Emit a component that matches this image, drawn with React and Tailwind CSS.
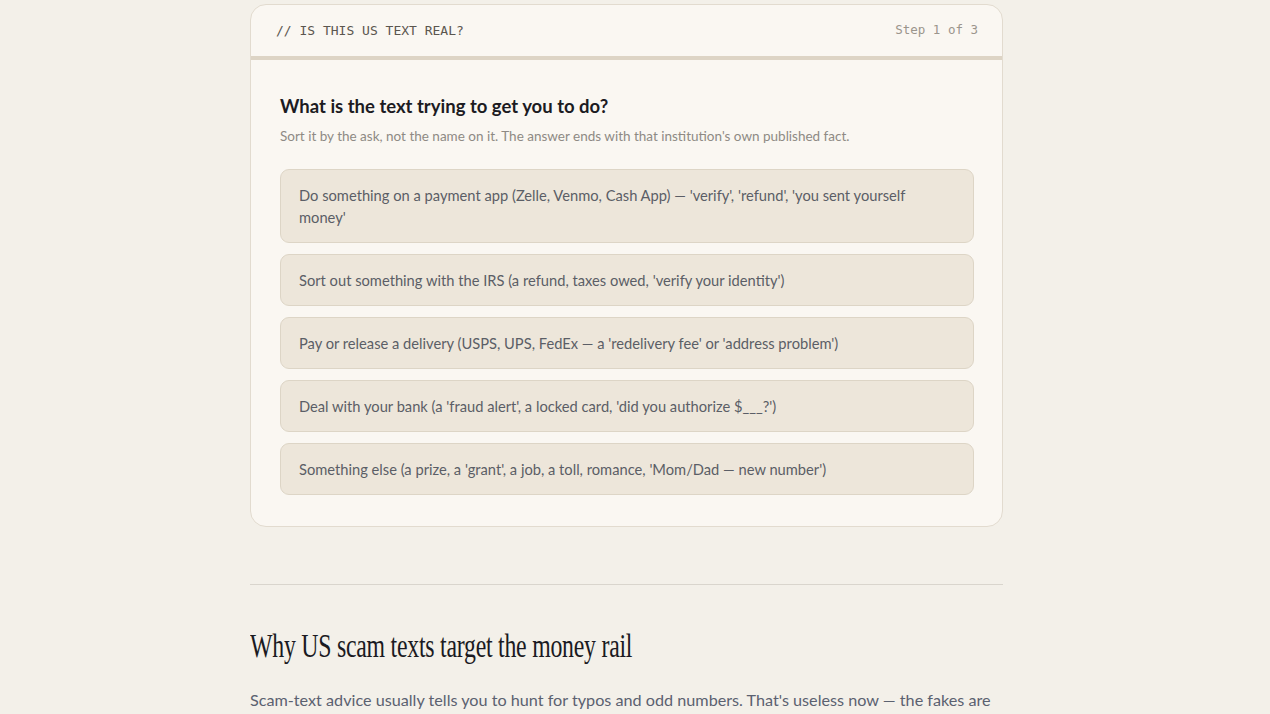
import React from "react";

const options = [
  "Do something on a payment app (Zelle, Venmo, Cash App) — 'verify', 'refund', 'you sent yourself money'",
  "Sort out something with the IRS (a refund, taxes owed, 'verify your identity')",
  "Pay or release a delivery (USPS, UPS, FedEx — a 'redelivery fee' or 'address problem')",
  "Deal with your bank (a 'fraud alert', a locked card, 'did you authorize $___?')",
  "Something else (a prize, a 'grant', a job, a toll, romance, 'Mom/Dad — new number')",
];

const mono = { fontFamily: "'DejaVu Sans Mono', 'Liberation Mono', monospace" };

export default function App() {
  return (
    <div className="min-h-[714px] bg-[#f3f0e9] overflow-hidden" style={{ fontFamily: "Lato, 'Noto Sans', sans-serif" }}>
      <div className="w-[753px] ml-[250px] pt-[4px]">
        <div className="rounded-[16px] border border-[#e2dbcf] bg-[#faf7f2] overflow-hidden">
          <div className="h-[55px] flex items-center justify-between pl-[25px] pr-[24px] border-b-[4px] border-[#ddd4c5]">
            <span className="text-[13px] text-[#5a564f]" style={mono}>// IS THIS US TEXT REAL?</span>
            <span className="text-[12.5px] text-[#9b958c]" style={mono}>Step 1 of 3</span>
          </div>
          <div className="pl-[29px] pr-[28px] pt-[32px] pb-[31px]">
            <h2 className="text-[18.5px] font-bold text-[#1c1b22] leading-[28px]">What is the text trying to get you to do?</h2>
            <p className="mt-[6px] text-[13.5px] text-[#8e8a84] leading-[20px]">Sort it by the ask, not the name on it. The answer ends with that institution's own published fact.</p>
            <div className="mt-[23px] flex flex-col gap-[11px]">
              {options.map((o, i) => (
                <div key={i} className="rounded-[9px] border border-[#ddd5c6] bg-[#ede6da] px-[18px] py-[14px] text-[14.7px] leading-[22px] text-[#5b5e66]">
                  {o}
                </div>
              ))}
            </div>
          </div>
        </div>
        <div className="mt-[57px] border-t border-[#d9d5cd]" />
        <h1 className="mt-[39px] text-[34px] leading-[44px] text-[#1a1a22] whitespace-nowrap origin-left scale-x-[0.70] tracking-[-0.01em]" style={{ fontFamily: "'Liberation Serif', 'DejaVu Serif', serif" }}>Why US scam texts target the money rail</h1>
        <p className="mt-[17px] text-[16.2px] leading-[30px] text-[#5b6170] whitespace-nowrap">Scam-text advice usually tells you to hunt for typos and odd numbers. That's useless now — the fakes are</p>
      </div>
    </div>
  );
}
